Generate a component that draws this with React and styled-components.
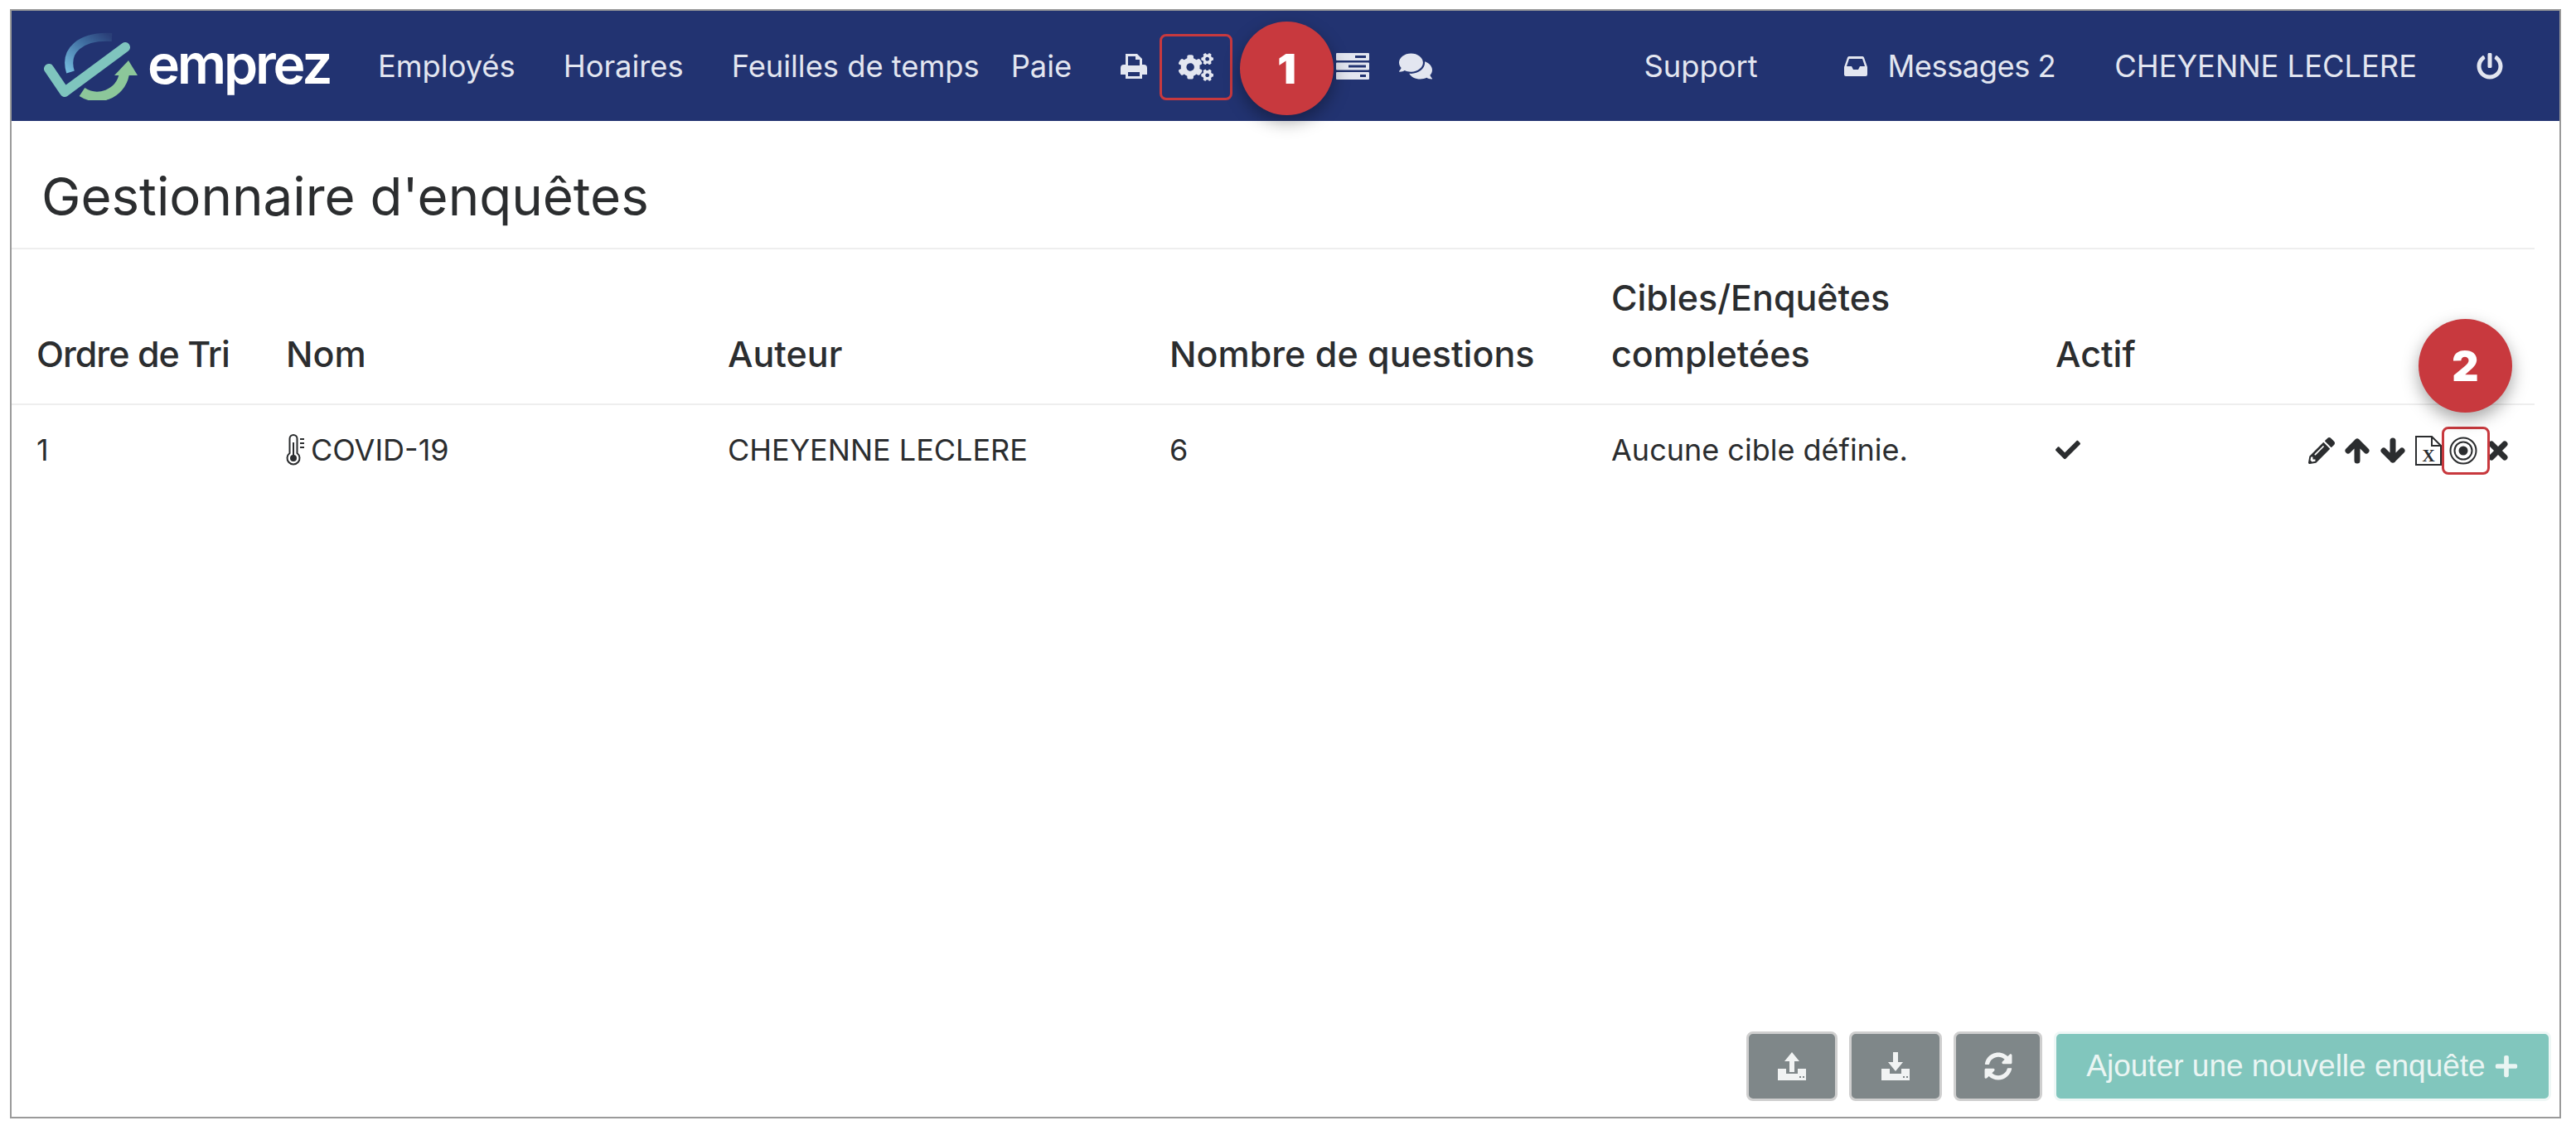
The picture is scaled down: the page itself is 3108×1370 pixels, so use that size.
import React from "react";
import styled, { createGlobalStyle } from "styled-components";
import {
  FaCogs,
  FaComments,
  FaPowerOff,
  FaPencilAlt,
  FaCheck,
  FaSyncAlt,
  FaPlus,
} from "react-icons/fa";

const Global = createGlobalStyle`
  html, body { margin: 0; padding: 0; background: #fff; }
  body { font-family: Inter, "Liberation Sans", sans-serif; color: #2b2d2f; }
`;

const Frame = styled.div`
  box-sizing: border-box;
  width: 3078px;
  height: 1339px;
  margin: 11px 0 0 12px;
  border: 2px solid #9a9a9a;
  display: flex;
  flex-direction: column;
`;

const Nav = styled.nav`
  height: 133px;
  flex: none;
  background: #223371;
  color: #e3e6f0;
  display: flex;
  align-items: center;
  padding-left: 39px;
  font-size: 36.3px;
`;

const Logo = styled.div`
  display: flex;
  align-items: center;
  width: 403px;
  flex: none;
  gap: 11px;
`;

const LogoWord = styled.span`
  color: #fff;
  font-size: 66px;
  font-weight: 600;
  letter-spacing: -3.2px;
  line-height: 1;
  margin-bottom: 6px;
`;

const NavLink = styled.a`
  margin-left: ${(p) => p.$left || 0}px;
  white-space: nowrap;
  display: inline-flex;
  align-items: center;
  gap: 25px;
  letter-spacing: ${(p) => (p.$tight ? "-0.5px" : "0")};
`;

const NavIcon = styled.span`
  display: inline-flex;
  margin-left: ${(p) => p.$left || 0}px;
  font-size: ${(p) => p.$size || 34}px;
`;

const Outlined = styled.span`
  position: relative;
  box-sizing: border-box;
  display: inline-flex;
  align-items: center;
  justify-content: center;
  flex: none;
  width: ${(p) => p.$w}px;
  height: ${(p) => p.$h}px;
  margin-left: ${(p) => p.$left || 0}px;
  margin-top: ${(p) => p.$top || 0}px;
  border: 3px solid #c8393e;
  border-radius: 8px;
`;

const Badge = styled.span`
  position: absolute;
  left: ${(p) => p.$x}px;
  top: ${(p) => p.$y}px;
  z-index: 3;
  width: 113px;
  height: 113px;
  border-radius: 50%;
  background: #c8393e;
  color: #fff;
  font-size: 50px;
  font-weight: 900;
  display: flex;
  align-items: center;
  justify-content: center;
  box-shadow: 0 8px 20px rgba(0, 0, 0, 0.35);
`;

const RightNav = styled.div`
  display: flex;
  align-items: center;
  margin-left: auto;
  padding-right: 68px;
`;

const Title = styled.h1`
  margin: 0 30px 0 0;
  height: 155px;
  flex: none;
  box-sizing: border-box;
  padding: 55px 0 0 36px;
  font-size: 63.6px;
  line-height: 72px;
  font-weight: 400;
  border-bottom: 2px solid #eee;
`;

const Row = styled.div`
  display: grid;
  grid-template-columns: 301px 533px 533px 533px 536px 1fr;
  margin-right: 30px;
  padding-left: 30px;
  align-items: ${(p) => (p.$head ? "end" : "center")};
  height: ${(p) => (p.$head ? 188 : 110)}px;
  box-sizing: border-box;
  border-bottom: ${(p) => (p.$head ? "2px solid #eee" : "none")};
`;

const HeadCell = styled.div`
  font-size: 43px;
  font-weight: 500;
  line-height: 68px;
  padding-bottom: 26px;
  letter-spacing: ${(p) => (p.$tight ? "-1px" : "0")};
`;

const Cell = styled.div`
  font-size: 36px;
  display: flex;
  align-items: center;
  gap: 6px;
  margin-top: -2px;
`;

const Actions = styled.div`
  display: flex;
  align-items: center;
  margin: 2px 0 0 269px;
  height: 60px;
  gap: 11px;
`;

const TargetSvg = styled.svg`
  margin-right: 6px;
`;

const CloseSvg = styled.svg`
  flex: none;
  margin-left: -13px;
`;

const Footer = styled.div`
  margin-top: auto;
  display: flex;
  justify-content: flex-end;
  gap: 14px;
  padding: 0 10px 19px 0;
`;

const GreyButton = styled.button`
  box-sizing: border-box;
  width: ${(p) => p.$w}px;
  height: 84px;
  background: #7f8789;
  border: 3px solid #cfcfcf;
  border-radius: 8px;
  color: #f1f3f3;
  display: flex;
  align-items: center;
  justify-content: center;
  padding: 0;
  font-size: 34px;
`;

const AddButton = styled.button`
  box-sizing: border-box;
  width: 600px;
  height: 84px;
  background: #81c6bd;
  border: 3px solid #eef7f6;
  border-radius: 8px;
  color: #eaf5f3;
  font-family: "Liberation Sans", sans-serif;
  font-size: 37px;
  display: flex;
  align-items: center;
  justify-content: center;
  gap: 10px;
  padding: 0;
`;

const LogoMark = () => (
  <svg width="114" height="82" viewBox="0 0 114 82">
    <defs>
      <linearGradient id="arcGrad" x1="0" y1="1" x2="1" y2="0">
        <stop offset="0" stopColor="#74bbdd" />
        <stop offset="0.6" stopColor="#3f6da0" />
        <stop offset="1" stopColor="#2a3f78" />
      </linearGradient>
    </defs>
    <path d="M32 48 C24 22 44 4 82 6" fill="none" stroke="url(#arcGrad)" strokeWidth="10" />
    <path d="M6 44 L25 72 L98 18" fill="none" stroke="#7fc5be" strokeWidth="12" strokeLinecap="round" strokeLinejoin="round" />
    <path d="M46 72 C64 84 92 76 97 50" fill="none" stroke="#8cc79a" strokeWidth="12" />
    <path d="M85 52 L102 34 L113 52 Z" fill="#8cc79a" />
  </svg>
);

const PrintIcon = () => (
  <svg width="34" height="32" viewBox="0 0 34 32" fill="currentColor">
    <path fillRule="evenodd" d="M7 1h14l6 6v7h2a4 4 0 0 1 4 4v8h-6v5H7v-5H1v-8a4 4 0 0 1 4-4h2zm3 3v11h14V8h-5V4zm0 19v5h14v-5z" />
  </svg>
);

const ServerIcon = () => (
  <svg width="40" height="32" viewBox="0 0 40 32" fill="currentColor">
    <path fillRule="evenodd" d="M1 0h38a1 1 0 0 1 1 1v7a1 1 0 0 1-1 1H1a1 1 0 0 1-1-1V1a1 1 0 0 1 1-1zm22 3v3h13V3zM1 11.500h38a1 1 0 0 1 1 1v7a1 1 0 0 1-1 1H1a1 1 0 0 1-1-1v-7a1 1 0 0 1 1-1zm14 3v3h21v-3zM1 23h38a1 1 0 0 1 1 1v7a1 1 0 0 1-1 1H1a1 1 0 0 1-1-1v-7a1 1 0 0 1 1-1zm28 3v3h7v-3z" />
  </svg>
);

const InboxIcon = () => (
  <svg width="28" height="24" viewBox="0 0 28 24" fill="currentColor">
    <path fillRule="evenodd" d="M6 0h16a2 2 0 0 1 2 1.500L28 13v9a2 2 0 0 1-2 2H2a2 2 0 0 1-2-2v-9L4 1.500A2 2 0 0 1 6 0zm0 3L3 12h6l2 4h6l2-4h6L22 3z" />
  </svg>
);

const TrayIcon = ({ down }) => (
  <svg width="36" height="36" viewBox="0 0 36 36" fill="currentColor">
    {down ? (
      <path d="M15 1h6v12h6L18 24 9 13h6z" />
    ) : (
      <path d="M18 1l9 11h-6v13h-6V12H9z" />
    )}
    <path d="M1 21h10v6h14v-6h10v14H1z" />
    <rect x="27" y="30" width="2" height="2" fill="#7f8789" />
    <rect x="31" y="30" width="2" height="2" fill="#7f8789" />
  </svg>
);

const ThermoIcon = () => (
  <svg width="24" height="38" viewBox="0 0 24 38" fill="none" stroke="#2b2d2f" strokeWidth="2">
    <path d="M4.500 23V5.500a4.500 4.500 0 0 1 9 0V23a7.500 7.500 0 1 1-9 0z" />
    <circle cx="9" cy="29" r="4" fill="#2b2d2f" stroke="none" />
    <path d="M9 10v16M17 6h5M17 11h5M17 16h5" />
  </svg>
);

// flèches épaisses, plus proches du glyphe de la capture que celles de react-icons
const ArrowIcon = ({ down }) => (
  <svg width="32" height="32" viewBox="0 0 32 32" fill="none" stroke="#2b2d2f" strokeWidth="7" strokeLinecap="round" strokeLinejoin="round">
    <g transform={down ? "rotate(180 16 16)" : undefined}>
      <path d="M16 28V5M5 16 16 5l11 11" />
    </g>
  </svg>
);

const CloseIcon = () => (
  <CloseSvg width="24" height="24" viewBox="0 0 24 24" fill="none" stroke="#2b2d2f" strokeWidth="7" strokeLinecap="round">
    <path d="M4 4l16 16M20 4 4 20" />
  </CloseSvg>
);

const ExcelIcon = () => (
  <svg width="32" height="36" viewBox="0 0 32 36" fill="none" stroke="#2b2d2f" strokeWidth="2">
    <path d="M1 1h19l11 11v23H1z" />
    <path d="M20 1v11h11" />
    <text x="16" y="31" textAnchor="middle" fontFamily="Liberation Serif, serif" fontWeight="700" fontSize="21" fill="#2b2d2f" stroke="none">
      X
    </text>
  </svg>
);

const TargetIcon = () => (
  <TargetSvg width="34" height="34" viewBox="0 0 34 34" fill="none" stroke="#2b2d2f" strokeWidth="2">
    <circle cx="17" cy="17" r="15.500" />
    <circle cx="17" cy="17" r="10.500" />
    <circle cx="17" cy="17" r="5.500" fill="#2b2d2f" stroke="none" />
  </TargetSvg>
);

export default function App() {
  return (
    <>
      <Global />
      <Frame>
        <Nav>
          <Logo>
            <LogoMark />
            <LogoWord>emprez</LogoWord>
          </Logo>
          <NavLink>Employés</NavLink>
          <NavLink $left={58}>Horaires</NavLink>
          <NavLink $left={58}>Feuilles de temps</NavLink>
          <NavLink $left={38}>Paie</NavLink>
          <NavIcon $left={58}>
            <PrintIcon />
          </NavIcon>
          <Outlined $w={88} $h={80} $left={14} $top={3}>
            <FaCogs size={42} />
            <Badge $x={94} $y={-18}>1</Badge>
          </Outlined>
          <NavIcon $left={125}>
            <ServerIcon />
          </NavIcon>
          <NavIcon $left={36} $size={40}>
            <FaComments />
          </NavIcon>
          <RightNav>
            <NavLink>Support</NavLink>
            <NavLink $left={104} $tight>
              <InboxIcon />
              Messages 2
            </NavLink>
            <NavLink $left={71}>CHEYENNE LECLERE</NavLink>
            <NavIcon $left={72} $size={32}>
              <FaPowerOff />
            </NavIcon>
          </RightNav>
        </Nav>
        <Title>Gestionnaire d'enquêtes</Title>
        <Row $head>
          <HeadCell $tight>Ordre de Tri</HeadCell>
          <HeadCell>Nom</HeadCell>
          <HeadCell>Auteur</HeadCell>
          <HeadCell>Nombre de questions</HeadCell>
          <HeadCell>
            Cibles/Enquêtes
            <br />
            completées
          </HeadCell>
          <HeadCell>Actif</HeadCell>
        </Row>
        <Row>
          <Cell>1</Cell>
          <Cell>
            <ThermoIcon />
            COVID-19
          </Cell>
          <Cell>CHEYENNE LECLERE</Cell>
          <Cell>6</Cell>
          <Cell>Aucune cible définie.</Cell>
          <Cell>
            <FaCheck size={30} />
            <Actions>
              <FaPencilAlt size={32} />
              <ArrowIcon />
              <ArrowIcon down />
              <ExcelIcon />
              <Outlined $w={58} $h={58} $left={-11}>
                <TargetIcon />
                <Badge $x={-31} $y={-133}>2</Badge>
              </Outlined>
              <CloseIcon />
            </Actions>
          </Cell>
        </Row>
        <Footer>
          <GreyButton $w={110}>
            <TrayIcon />
          </GreyButton>
          <GreyButton $w={112}>
            <TrayIcon down />
          </GreyButton>
          <GreyButton $w={107}>
            <FaSyncAlt />
          </GreyButton>
          <AddButton>
            Ajouter une nouvelle enquête
            <FaPlus size={30} />
          </AddButton>
        </Footer>
      </Frame>
    </>
  );
}
